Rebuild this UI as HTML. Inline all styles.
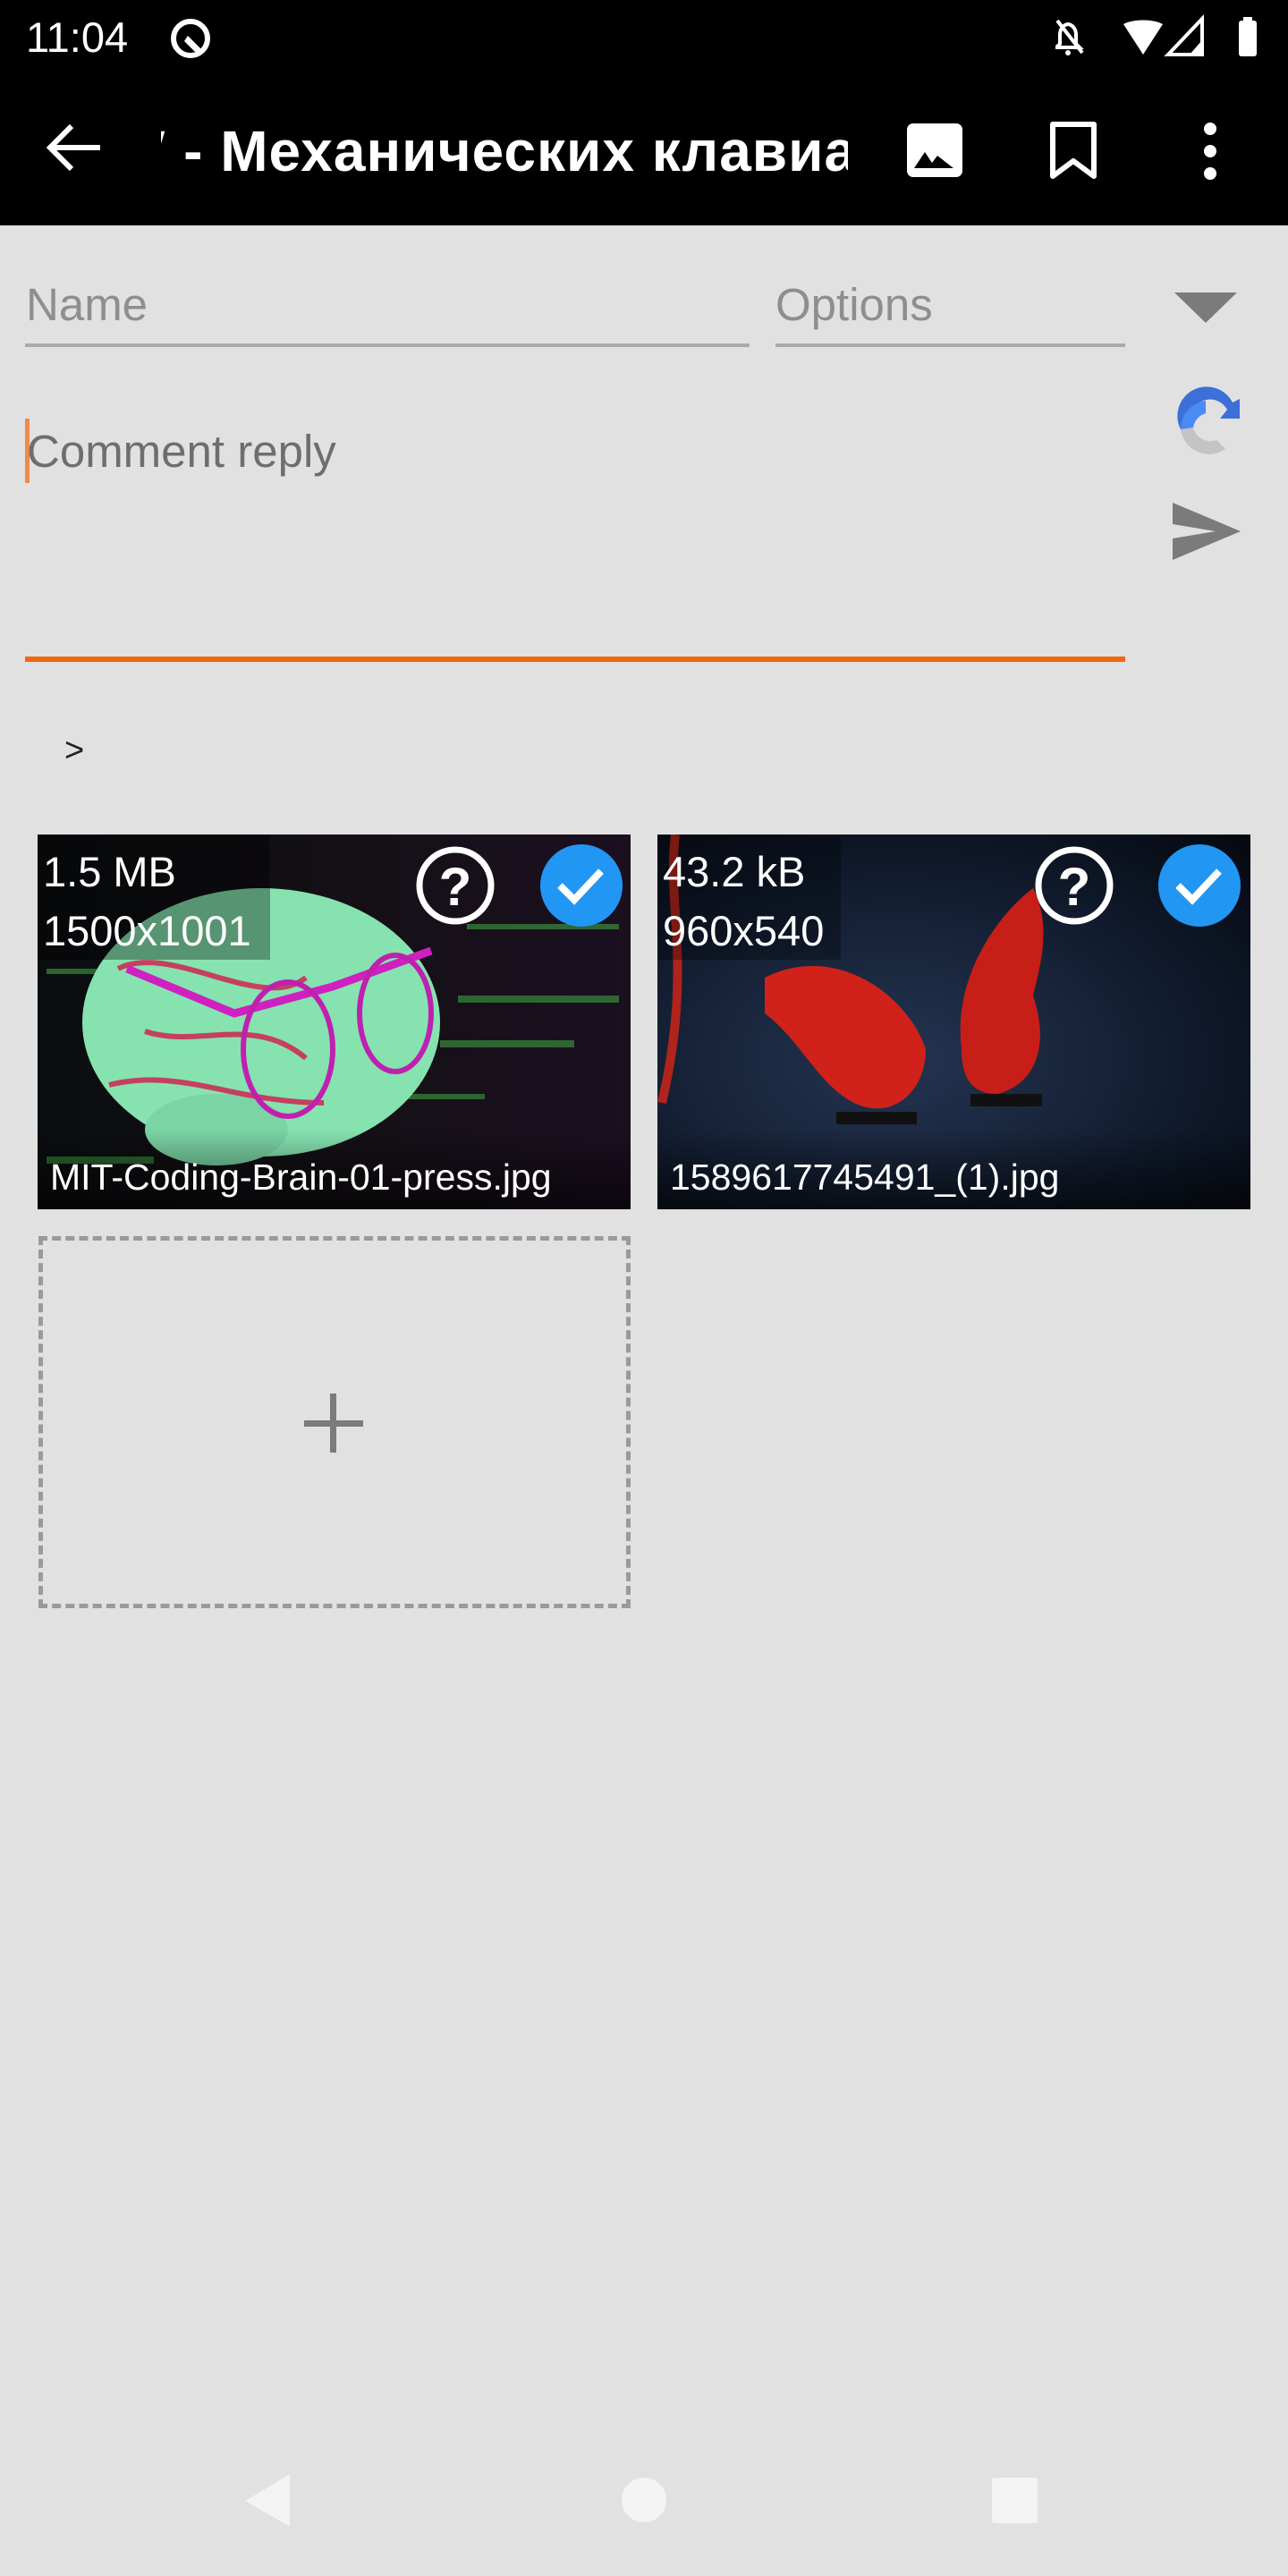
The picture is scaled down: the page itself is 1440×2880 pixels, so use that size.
<!DOCTYPE html>
<html><head><meta charset="utf-8">
<style>
*{margin:0;padding:0;box-sizing:border-box}
body{width:1440px;height:2880px;background:#e1e1e1;font-family:"Liberation Sans",sans-serif;position:relative;overflow:hidden}
.abs{position:absolute}
.bar{left:0;top:0;width:1440px;height:252px;background:#000}
.t{color:#fff;white-space:nowrap}
.tile{position:absolute;width:663px;height:419px;overflow:hidden}
.lbl{position:absolute;color:#fff;font-size:47px;line-height:66px}
</style></head><body>
<div class="abs bar"></div>
<div class="abs t" style="left:29px;top:12px;font-size:47px;line-height:60px">11:04</div>
<svg class="abs" style="left:188px;top:18px" width="50" height="50" viewBox="0 0 50 50"><circle cx="25" cy="25" r="19" fill="none" stroke="#fff" stroke-width="6"/><path d="M22 22 L38 38 L30 40 L18 28Z" fill="#fff"/></svg>
<svg class="abs" style="left:1180px;top:14px" width="240" height="56" viewBox="0 0 240 50">
<path d="M14 10c-6 1-9 6-9 12v10l-4 4h26l-4-4V22c0-6-3-11-9-12z" fill="none" stroke="#fff" stroke-width="4"/><line x1="2" y1="6" x2="30" y2="42" stroke="#fff" stroke-width="4"/><circle cx="14" cy="42" r="3" fill="#fff"/>
<path d="M76 10c11-6 33-6 44 0l-22 34z" fill="#fff"/>
<path d="M164 44h-38l38-40z" fill="none" stroke="#fff" stroke-width="4"/><path d="M150 44h14V28z" fill="#fff"/>
<rect x="205" y="6" width="20" height="40" rx="3" fill="#fff"/><rect x="210" y="2" width="10" height="6" fill="#fff"/>
</svg>
<svg class="abs" style="left:48px;top:135px" width="70" height="60" viewBox="0 0 70 60"><path d="M64 30H8M32 6L8 30l24 24" fill="none" stroke="#fff" stroke-width="6"/></svg>
<div class="abs" style="left:180px;top:126px;width:768px;height:86px;overflow:hidden"><div class="t" style="font-size:64px;font-weight:bold;line-height:86px;margin-left:-10px;letter-spacing:1px">′ - Механических клавиатур</div></div>
<svg class="abs" style="left:1012px;top:136px" width="66" height="64" viewBox="0 0 66 64"><rect x="2" y="2" width="62" height="60" rx="7" fill="#fff"/><path d="M10 52l12-18 8 12 6-8 18 14z" fill="#000"/></svg>
<svg class="abs" style="left:1172px;top:134px" width="56" height="70" viewBox="0 0 56 70"><path d="M5 5h46v58L28 46 5 63z" fill="none" stroke="#fff" stroke-width="6" stroke-linejoin="round"/></svg>
<svg class="abs" style="left:1338px;top:134px" width="30" height="70" viewBox="0 0 30 70"><circle cx="15" cy="10" r="7" fill="#fff"/><circle cx="15" cy="35" r="7" fill="#fff"/><circle cx="15" cy="60" r="7" fill="#fff"/></svg>
<div class="abs" style="left:29px;top:306px;font-size:51px;color:#8e8e8e;line-height:70px">Name</div>
<div class="abs" style="left:28px;top:384px;width:810px;height:4px;background:#a9a9a9"></div>
<div class="abs" style="left:867px;top:306px;font-size:51px;color:#8e8e8e;line-height:70px">Options</div>
<div class="abs" style="left:867px;top:384px;width:391px;height:4px;background:#a9a9a9"></div>
<svg class="abs" style="left:1313px;top:327px" width="70" height="34" viewBox="0 0 70 34"><path d="M0 0h70L35 34z" fill="#7b7b7b"/></svg>
<svg class="abs" style="left:1308px;top:430px" width="84" height="80" viewBox="0 0 84 80">
<path d="M12 50A32 32 0 0 1 70 20l8-4v22H56l8-10A20 20 0 0 0 26 48z" fill="#3d6fd8"/>
<path d="M12 50A32 32 0 0 1 40 18v14A20 20 0 0 0 26 48z" fill="#4a8af4"/>
<path d="M12 50A32 32 0 0 0 62 72l-10-10A20 20 0 0 1 26 48z" fill="#c4c4c4"/>
</svg>
<svg class="abs" style="left:1311px;top:562px" width="76" height="64" viewBox="0 0 76 64"><path d="M0 0L76 32 0 64V40l48-8L0 24z" fill="#7b7b7b"/></svg>
<div class="abs" style="left:28px;top:468px;width:5px;height:72px;background:#f08a4a"></div>
<div class="abs" style="left:30px;top:470px;font-size:51px;color:#6e6e6e;line-height:70px">Comment reply</div>
<div class="abs" style="left:28px;top:734px;width:1230px;height:6px;background:#f26714"></div>
<div class="abs" style="left:72px;top:814px;font-size:38px;color:#222;line-height:50px">&gt;</div>
<div class="tile" style="left:42px;top:933px;background:linear-gradient(90deg,#0a0d10,#141015 50%,#1b0f20)">
<svg class="abs" style="left:0;top:0" width="663" height="419" viewBox="0 0 663 419">
<g fill="#3ea040" opacity=".6"><rect x="470" y="180" width="180" height="8"/><rect x="450" y="230" width="150" height="8"/><rect x="480" y="100" width="170" height="6"/><rect x="380" y="290" width="120" height="6"/><rect x="10" y="360" width="120" height="8"/><rect x="10" y="150" width="60" height="6"/></g>
<ellipse cx="250" cy="210" rx="200" ry="150" fill="#86e3b0"/>
<ellipse cx="200" cy="330" rx="80" ry="40" fill="#7bd4a4"/>
<path d="M90 150 C150 120 250 200 300 160 M120 220 C180 240 240 200 300 250 M80 280 C160 260 220 300 320 300" stroke="#c54060" stroke-width="6" fill="none"/>
<path d="M100 150 L220 200 L330 170 L440 130" stroke="#d020c0" stroke-width="9" fill="none"/>
<ellipse cx="280" cy="240" rx="50" ry="75" stroke="#c020b0" stroke-width="6" fill="none"/>
<ellipse cx="400" cy="200" rx="40" ry="65" stroke="#c020b0" stroke-width="6" fill="none"/>
</svg>
<div class="abs" style="left:0;top:0;width:260px;height:140px;background:rgba(0,0,0,.35)"></div>
<div class="abs" style="left:0;top:330px;width:663px;height:89px;background:linear-gradient(transparent,rgba(0,0,0,.6))"></div>
<div class="lbl" style="left:6px;top:9px">1.5 MB</div>
<div class="lbl" style="left:6px;top:75px">1500x1001</div>
<div class="lbl" style="left:14px;top:350px;font-size:41px">MIT-Coding-Brain-01-press.jpg</div>
</div>
<div class="tile" style="left:735px;top:933px;background:radial-gradient(ellipse at 40% 60%,#243552,#101a2c 60%,#05080f)">
<svg class="abs" style="left:0;top:0" width="663" height="419" viewBox="0 0 663 419">
<path d="M20 0 C10 80 40 150 5 300" stroke="#b0241c" stroke-width="10" fill="none"/>
<path d="M120 160 C200 120 280 180 300 240 C300 290 260 320 220 300 C180 280 160 230 120 200z" fill="#d0221a"/>
<path d="M340 240 C330 160 380 90 420 60 C440 100 430 140 420 180 C440 240 420 280 380 290 C350 290 340 270 340 240z" fill="#c81e18"/>
<rect x="200" y="310" width="90" height="14" fill="#111"/><rect x="350" y="290" width="80" height="14" fill="#111"/>
</svg>
<div class="abs" style="left:0;top:0;width:205px;height:140px;background:rgba(0,0,0,.3)"></div>
<div class="abs" style="left:0;top:330px;width:663px;height:89px;background:linear-gradient(transparent,rgba(0,0,0,.6))"></div>
<div class="lbl" style="left:6px;top:9px">43.2 kB</div>
<div class="lbl" style="left:6px;top:75px">960x540</div>
<div class="lbl" style="left:14px;top:350px;font-size:41px">1589617745491_(1).jpg</div>
</div>
<svg class="abs" style="left:0;top:940px" width="1440" height="100" viewBox="0 940 1440 100">
<g><circle cx="509" cy="990" r="40" fill="none" stroke="#fff" stroke-width="7"/><text x="509" y="1012" font-family="Liberation Sans" font-weight="bold" font-size="60" fill="#fff" text-anchor="middle">?</text>
<circle cx="650" cy="990" r="46" fill="#2196f3"/><path d="M626 990l16 16 30-32" stroke="#fff" stroke-width="8" fill="none"/></g>
<g><circle cx="1201" cy="990" r="40" fill="none" stroke="#fff" stroke-width="7"/><text x="1201" y="1012" font-family="Liberation Sans" font-weight="bold" font-size="60" fill="#fff" text-anchor="middle">?</text>
<circle cx="1341" cy="990" r="46" fill="#2196f3"/><path d="M1317 990l16 16 30-32" stroke="#fff" stroke-width="8" fill="none"/></g>
</svg>
<div class="abs" style="left:43px;top:1382px;width:662px;height:416px;border:5px dashed #9a9a9a"></div>
<div class="abs" style="left:340px;top:1588px;width:66px;height:7px;background:#7b7b7b"></div>
<div class="abs" style="left:369px;top:1558px;width:7px;height:66px;background:#7b7b7b"></div>
<svg class="abs" style="left:0;top:2760px" width="1440" height="70" viewBox="0 2760 1440 70">
<path d="M323 2768v55l-47-27z" fill="#f3f3f3" stroke="#f3f3f3" stroke-width="2" stroke-linejoin="round"/>
<circle cx="720" cy="2795" r="25" fill="#f3f3f3"/>
<rect x="1109" y="2770" width="51" height="51" rx="3" fill="#f3f3f3"/>
</svg>
</body></html>
